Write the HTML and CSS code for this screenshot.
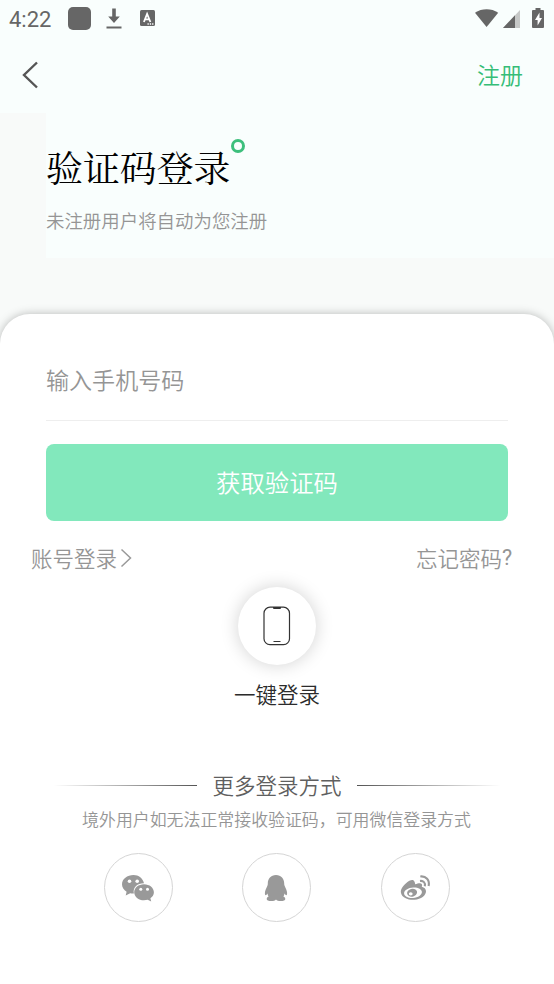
FILE: index.html
```html
<!DOCTYPE html>
<html lang="zh-CN">
<head>
<meta charset="utf-8">
<title>验证码登录</title>
<link rel="stylesheet" href="styles.css">
</head>
<body>
<header class="top">
  <div class="status">
    <span class="time">4:22</span>
    <span class="app-dot"></span>
    <svg class="download" width="16" height="22" viewBox="0 0 16 22"><path d="M6.200.5h3.600V8.500h4L8 15 2.200 8.500h4zM.5 18.500h15v2H.5z" fill="#666"/></svg>
    <svg class="keyboard" width="15" height="16" viewBox="0 0 15 16"><rect width="15" height="16" rx="1.500" fill="#666"/><path d="M3.900 12 7.100 4l3.300 8M5.200 9.400h3.900" fill="none" stroke="#fff" stroke-width="1.800"/><path d="M7.500 14h1.300m1 0h1.300m1 0h1.300" stroke="#fff" stroke-width="1.300"/></svg>
    <svg class="signals" width="70" height="22" viewBox="0 0 70 22"><path d="M0 4.700C7 .2 16.200.2 23.200 4.700L11.600 19z" fill="#666"/><path d="M28 20 45 2v18z" fill="#c6c8c7"/><path d="M28 20 40 7.300V20z" fill="#666"/><path d="M60.500 0h5v2H68q1 0 1 1v16q0 1-1 1H58q-1 0-1-1V3q0-1 1-1h2.500z" fill="#666"/><path d="M64.500 4.500 60 12h2.600v5.500L67 10h-2.500z" fill="#fff"/></svg>
  </div>
  <nav class="nav">
    <svg class="back" width="18" height="28" viewBox="0 0 18 28"><path d="M16 1.500 3 14l13 12.500" fill="none" stroke="#555" stroke-width="2.400"/></svg>
    <a class="register">注册</a>
  </nav>
</header>
<section class="hero">
  <div class="intro">
    <h1>验证码登录<span class="ring"></span></h1>
    <p>未注册用户将自动为您注册</p>
  </div>
</section>
<main class="card">
  <div class="phone-field">输入手机号码</div>
  <button class="submit">获取验证码</button>
  <div class="links">
    <a>账号登录<svg width="12" height="20" viewBox="0 0 12 20"><path d="m1.500 1.500 9 8.500-9 8.500" fill="none" stroke="#999" stroke-width="1.500"/></svg></a>
    <a>忘记密码<span class="mark">?</span></a>
  </div>
  <div class="quick">
    <div class="quick-icon"><svg width="28" height="40" viewBox="0 0 28 40"><rect x="1" y="1.200" width="25.500" height="37.500" rx="6" fill="none" stroke="#333" stroke-width="1.200"/><path d="M10 1h8v1q0 1-1 1h-6q-1 0-1-1z" fill="#333"/><path d="M10.500 35.500h7" stroke="#333"/></svg></div>
    <span>一键登录</span>
  </div>
  <div class="divider"><i></i><span>更多登录方式</span><i class="right"></i></div>
  <p class="hint">境外用户如无法正常接收验证码，可用微信登录方式</p>
  <div class="social">
    <a><svg width="34" height="30" viewBox="0 0 34 30"><path d="M12.500 2C6.200 2 1 6 1 11.300c0 3.100 1.800 5.700 4.600 7.400L4.700 22.500l4.500-2.300c1.300.3 2.400.4 3.700.3C11.500 13.800 17 10 23 10.200 22 5.400 17.700 2 12.500 2z" fill="#999"/><path d="M23 11.200c-5.600 0-9.800 3.600-9.800 8s4.300 8.100 9.800 8.100c1.400 0 2.500-.2 3.700-.5l3.500 1.700-.8-3.200c2.200-1.500 3.500-3.600 3.500-6.100 0-4.400-4.400-8-9.900-8z" fill="#999"/><g fill="#fff"><circle cx="8.500" cy="8.300" r="1.800"/><circle cx="16.200" cy="8.300" r="1.800"/><circle cx="19.800" cy="16.200" r="1.500"/><circle cx="26.500" cy="16.200" r="1.500"/></g></svg></a>
    <a><svg width="34" height="30" viewBox="0 0 34 30"><path d="M17 2c-5.200 0-8.200 3.700-8.200 8.500 0 1-.1 1.500-.4 2.300-1.400 3.200-2.500 5.200-2.500 7.300 0 1.500.3 2.200.7 2.200.6 0 1.400-.9 1.900-1.700.3 1.500.4 2.200 1.100 2.800-1.200.5-1.900 1.300-1.900 2.500 0 1.500 1.900 2.100 4.500 2.100 2.200 0 4-.6 4.800-1.600.8 1 2.600 1.600 4.800 1.600 2.600 0 4.500-.6 4.500-2.100 0-1.200-.7-2-1.900-2.500.7-.6.800-1.300 1.100-2.800.5.800 1.300 1.700 1.900 1.700.4 0 .7-.7.700-2.200 0-2.100-1.100-4.100-2.500-7.300-.3-.8-.4-1.300-.4-2.300C25.200 5.700 22.200 2 17 2z" fill="#999"/></svg></a>
    <a><svg width="34" height="30" viewBox="0 0 34 30"><path fill="#999" fill-rule="evenodd" d="M16.500 8.800c-1-3.200-5-1.500-8.200 1.100C4.500 13 2.300 16.600 3 20c.9 4.800 7.200 7.200 13.500 6.800 6.600-.4 11.500-4.200 11.500-8.500 0-2.400-1.800-3.800-4.200-4.500 1.400-3.400-1.300-4.800-6.700-2.500.1-.9-.2-1.700-.6-2.500zM15.300 14.500c-5.200.2-9.300 2.900-9.200 6 .2 2.900 4.300 4.900 9.100 4.500 4.900-.4 8.800-3.300 8.700-6.100-.1-2.700-3.800-4.600-8.600-4.400z"/><path fill="#999" fill-rule="evenodd" d="M14.200 15.800c-3.300.5-5.500 2.700-5 5 .4 2.200 3.200 3.500 6.100 2.600 2.700-.8 4.300-3.100 3.600-5.100-.6-1.800-2.600-2.800-4.700-2.500zM12.700 19.200a1.900 1.600 0 1 0 .1 3.200 1.900 1.600 0 0 0-.1-3.200z"/><path d="M22 8c3.300-.5 5.700 1.800 4.800 5.200M22.300 3.500c5.600-.7 9.700 3.500 8.300 9.600" fill="none" stroke="#999" stroke-width="2.100"/></svg></a>
  </div>
</main>
</body>
</html>
```

FILE: styles.css
```css
* { box-sizing: border-box; }
body {
  margin: 0;
  width: 554px;
  height: 984px;
  overflow: hidden;
  background: #f8faf9;
  font-family: "Noto Sans CJK SC", sans-serif;
  font-weight: 350;
  color: #959595;
}
h1, p { margin: 0; font-weight: 350; }
svg { display: block; flex: none; }
.top { height: 113px; background: #f9fefd; }
.status { display: flex; align-items: center; height: 37px; padding: 0 9px; }
.time { width: 59px; font: 22px/38px Roboto, sans-serif; padding-top: 2px; color: #666; }
.app-dot { width: 23px; height: 23px; border-radius: 5px; background: #666; }
.download { margin-left: 15px; }
.keyboard { margin-left: 18px; margin-top: -1px; }
.signals { margin-left: auto; }
.nav { display: flex; justify-content: space-between; align-items: center; height: 76px; padding: 0 31px 0 21px; }
.register { margin-top: -2px; font-size: 23px; line-height: 34px; color: #35bd77; }
.hero { height: 200px; padding-left: 46px; }
.intro { height: 145px; padding-top: 31px; background: #f9fefd; }
h1 {
  display: flex;
  height: 46px;
  font: 400 36.9px/46px "Noto Serif CJK SC", "Noto Serif SC", "Source Han Serif SC", "Noto Sans CJK SC", serif;
  color: #000;
}
.ring { width: 14px; height: 14px; margin: -5px 0 0 1px; border: 3px solid #3dbf7c; border-radius: 50%; }
.intro p { margin-top: 16px; font-size: 18.46px; line-height: 28px; }
.card {
  height: 670px;
  margin-top: 1px;
  padding: 37px 46px 0;
  border-radius: 30px 30px 0 0;
  background: #fff;
  box-shadow: 0 0 10px rgba(0, 0, 0, .26);
}
.phone-field { height: 70px; border-bottom: 1px solid #eee; font-size: 23.07px; line-height: 56px; }
.submit {
  display: block;
  width: 462px;
  height: 77px;
  margin-top: 23px;
  padding: 0 0 2px;
  border: 0;
  border-radius: 8px;
  background: #82e8bc;
  color: #fff;
  font: 350 24.4px/75px "Noto Sans CJK SC", sans-serif;
}
.links { display: flex; justify-content: space-between; height: 66px; margin: 0 -6px 0 -15px; padding-top: 21px; font-size: 21.5px; line-height: 32px; }
.links a { display: flex; align-items: center; height: 32px; }
.links svg { margin-left: 3px; }
.mark { width: 12px; font-family: Roboto, sans-serif; font-weight: 400; }
.quick { display: flex; flex-direction: column; align-items: center; color: #2b2b2b; font-size: 21.5px; line-height: 32px; }
.quick-icon { display: flex; align-items: center; justify-content: center; width: 78px; height: 78px; margin-bottom: 13px; border-radius: 50%; background: #fff; box-shadow: 0 0 18px rgba(0, 0, 0, .18); }
.divider { display: flex; justify-content: space-between; align-items: center; height: 32px; margin-top: 59px; color: #5f5f5f; font-size: 21.5px; }
.divider span { margin-top: -2px; }
.divider i { width: 151px; height: 1px; background: linear-gradient(90deg, transparent 5%, #555); }
.divider .right { background: linear-gradient(270deg, transparent 5%, #555); }
.hint { margin: 5px -1px 0 -2px; text-align: center; white-space: nowrap; font-size: 16.92px; line-height: 26px; }
.social { display: flex; justify-content: space-between; margin: 21px 58px 0 57.500px; }
.social a { display: flex; align-items: center; justify-content: center; width: 69px; height: 69px; border: 1.5px solid #d5d5d5; border-radius: 50%; }
.social svg { margin-left: -1px; }
```
